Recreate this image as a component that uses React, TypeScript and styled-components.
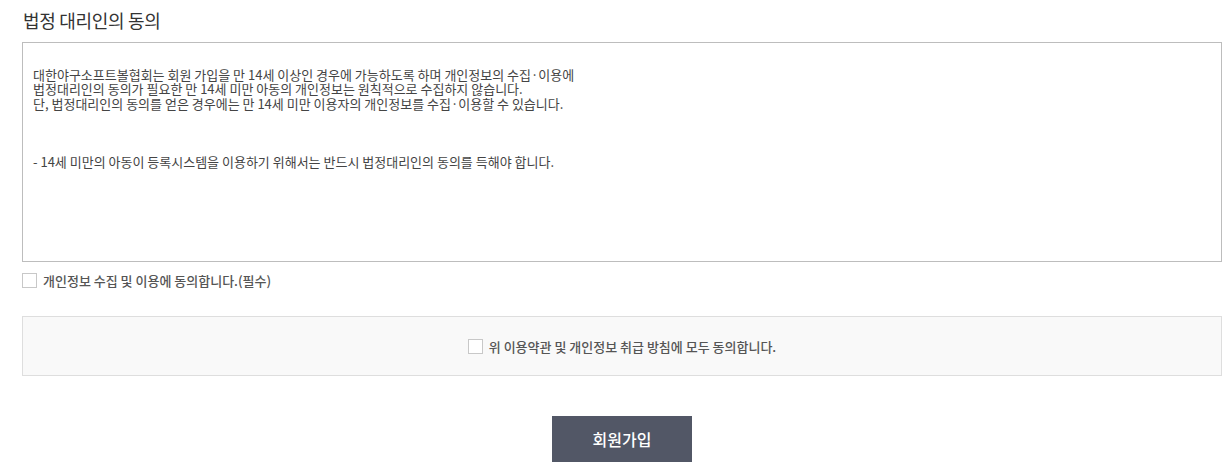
import styled, { createGlobalStyle } from "styled-components";

const GlobalStyle = createGlobalStyle`
  body {
    margin: 0;
    background: #fff;
    font-family: "Noto Sans CJK KR", "Noto Sans", sans-serif;
  }
`;

const Container = styled.div`
  width: 1200px;
  padding: 0 22px;
`;

const Title = styled.h2`
  margin: 8px 0 10px 1px;
  font-size: 18px;
  line-height: 24px;
  font-weight: 400;
  letter-spacing: -0.3px;
  color: #333;
`;

const TermsBox = styled.div`
  box-sizing: border-box;
  height: 220px;
  padding: 10px;
  border: 1px solid #bdbdbd;
  white-space: pre-wrap;
  overflow: hidden;
  font-size: 13px;
  line-height: 14.5px;
  color: #444;
`;

const CheckRow = styled.label<{ $center?: boolean }>`
  display: flex;
  align-items: center;
  justify-content: ${(p) => (p.$center ? "center" : "flex-start")};
  gap: 6px;
  font-size: 13px;
  font-weight: 500;
  color: #555;
  cursor: pointer;
`;

const Box = styled.span`
  display: inline-block;
  box-sizing: border-box;
  width: 15px;
  height: 15px;
  border: 1px solid #c8c8c8;
  background: #fff;
  flex-shrink: 0;
`;

const RequiredRow = styled.div`
  margin-top: 10px;
  height: 16px;
  display: flex;
  align-items: center;
`;

const AgreeAll = styled.div`
  box-sizing: border-box;
  margin-top: 28px;
  height: 60px;
  border: 1px solid #dedede;
  background: #f9f9f9;
  display: flex;
  align-items: center;
  justify-content: center;
`;

const ButtonWrap = styled.div`
  display: flex;
  justify-content: center;
  margin-top: 40px;
`;

const JoinButton = styled.button`
  width: 140px;
  height: 46px;
  border: none;
  background: #525766;
  color: #fff;
  font-family: "Noto Sans CJK KR", sans-serif;
  font-size: 16px;
  font-weight: 500;
  cursor: pointer;
`;

const terms = `
대한야구소프트볼협회는 회원 가입을 만 14세 이상인 경우에 가능하도록 하며 개인정보의 수집·이용에
법정대리인의 동의가 필요한 만 14세 미만 아동의 개인정보는 원칙적으로 수집하지 않습니다.
단, 법정대리인의 동의를 얻은 경우에는 만 14세 미만 이용자의 개인정보를 수집·이용할 수 있습니다.



- 14세 미만의 아동이 등록시스템을 이용하기 위해서는 반드시 법정대리인의 동의를 득해야 합니다.`;

const App = () => {
  return (
    <Container>
      <GlobalStyle />
      <Title>법정 대리인의 동의</Title>
      <TermsBox>{terms}</TermsBox>
      <RequiredRow>
        <CheckRow>
          <Box />
          <span>개인정보 수집 및 이용에 동의합니다.(필수)</span>
        </CheckRow>
      </RequiredRow>
      <AgreeAll>
        <CheckRow $center>
          <Box />
          <span>위 이용약관 및 개인정보 취급 방침에 모두 동의합니다.</span>
        </CheckRow>
      </AgreeAll>
      <ButtonWrap>
        <JoinButton>회원가입</JoinButton>
      </ButtonWrap>
    </Container>
  );
};

export default App;
